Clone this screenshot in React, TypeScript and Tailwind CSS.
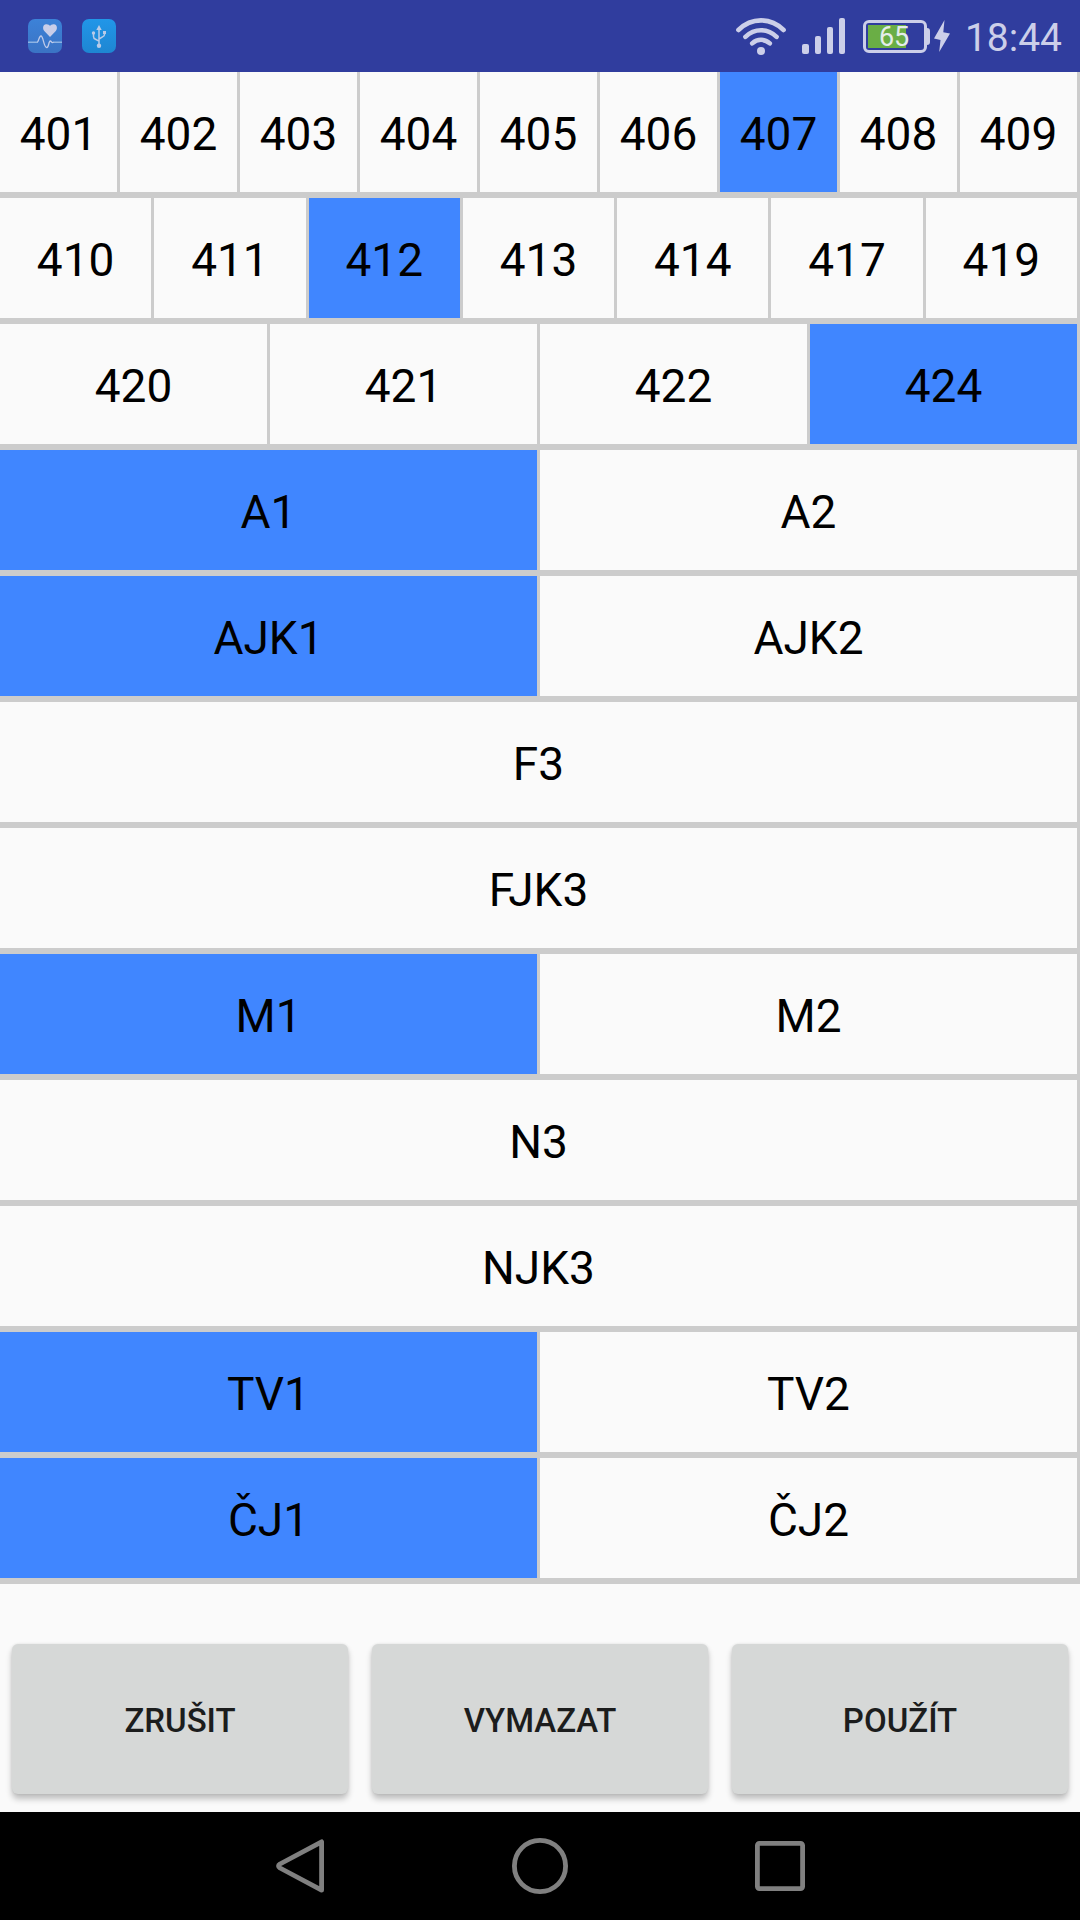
import { useState } from "react";

const ROWS: string[][] = [
  ["401", "402", "403", "404", "405", "406", "407", "408", "409"],
  ["410", "411", "412", "413", "414", "417", "419"],
  ["420", "421", "422", "424"],
  ["A1", "A2"],
  ["AJK1", "AJK2"],
  ["F3"],
  ["FJK3"],
  ["M1", "M2"],
  ["N3"],
  ["NJK3"],
  ["TV1", "TV2"],
  ["ČJ1", "ČJ2"],
];

const INITIAL = ["407", "412", "424", "A1", "AJK1", "M1", "TV1", "ČJ1"];

function HealthIcon() {
  return (
    <svg width="34" height="34" viewBox="0 0 34 34" aria-hidden="true">
      <defs>
        <linearGradient id="health" x1="0" y1="0" x2="0" y2="1">
          <stop offset="0" stopColor="#3c82d8" />
          <stop offset="1" stopColor="#3b73c4" />
        </linearGradient>
      </defs>
      <rect width="34" height="34" rx="7" fill="url(#health)" />
      <path d="M22 18 L16.3 12 C14.2 9.3 15 5.6 18 5.2 C20 5 21.4 5.8 22 7 C22.7 5.8 24.2 5 26 5.2 C29 5.6 29.9 9.3 27.8 12 Z" fill="#c9cee9" />
      <path d="M0 23.3 H10 M25 23.3 H34" stroke="#8db3e3" strokeWidth="1.6" />
      <path d="M9.5 23 C10.8 22 11 17 13 17 C15.5 17 15.5 28.5 18.8 28.5 C21 28.5 20.5 22 22.3 22 C23.4 22 23.6 24.5 25.5 23.3" fill="none" stroke="#c0cbea" strokeWidth="1.3" />
    </svg>
  );
}

function UsbIcon() {
  return (
    <svg width="34" height="34" viewBox="0 0 34 34" aria-hidden="true">
      <defs>
        <linearGradient id="usb" x1="0" y1="0" x2="0" y2="1">
          <stop offset="0" stopColor="#2196e8" />
          <stop offset="1" stopColor="#1e86d2" />
        </linearGradient>
      </defs>
      <rect width="34" height="34" rx="7" fill="url(#usb)" />
      <g fill="none" stroke="#b9cbe8" strokeWidth="1.5">
        <path d="M17 9 V27 M11.5 14 V17.5 Q11.5 19.5 13.5 20.3 L17 22.2 M22.5 14 V15.5 Q22.5 17 20.5 17.9 L17 20" />
      </g>
      <g fill="#b9cbe8">
        <path d="M17 6 L19.7 11 H14.3 Z" />
        <circle cx="11.5" cy="14" r="1.7" />
        <rect x="21" y="12" width="3" height="3" />
        <circle cx="17" cy="26.8" r="2.2" />
      </g>
    </svg>
  );
}

function WifiIcon() {
  return (
    <svg width="50" height="37" viewBox="0 0 50 37" aria-label="Wi-Fi">
      <g fill="none" stroke="#cccfe9" strokeWidth="4.6" strokeLinecap="round">
        <path d="M2.4 12 C15.5 -0.8 34.5 -0.8 47.6 12" />
        <path d="M9.4 18.8 C18.5 10 31.5 10 40.6 18.8" />
        <path d="M16.2 25.4 C21.4 20.6 28.6 20.6 33.8 25.4" />
      </g>
      <circle cx="25" cy="33" r="4" fill="#cccfe9" />
    </svg>
  );
}

function SignalIcon() {
  return (
    <svg width="43" height="36" viewBox="0 0 43 36" fill="#cccfe9" aria-label="Signal">
      <rect x="0" y="26" width="7" height="10" rx="2" />
      <rect x="13" y="18" width="6" height="18" rx="2" />
      <rect x="25" y="9" width="6" height="27" rx="2" />
      <rect x="37" y="0" width="6" height="36" rx="2" />
    </svg>
  );
}

function Battery() {
  return (
    <div className="flex items-center">
      <div className="flex h-[33px] w-16 items-center rounded-md border-3 border-[#cccfe9] p-0.5">
        <div className="flex h-full w-[38px] items-center bg-[#6aae45] pt-0.5 pl-[11px]">
          <span className="text-[27px] leading-none text-[#e4edea]">65</span>
        </div>
      </div>
      <div className="h-[17px] w-[3px] rounded-r-sm bg-[#cccfe9]" />
      <svg className="ml-1" width="16" height="32" viewBox="0 0 16 32" aria-hidden="true">
        <path d="M10.5 0 L0 18.5 L6.5 20 L5.2 32 L16 13.5 L9.3 12.3 Z" fill="#cccfe9" />
      </svg>
    </div>
  );
}

export default function App() {
  const [selected, setSelected] = useState<string[]>(INITIAL);

  const toggle = (name: string) =>
    setSelected((s) => (s.includes(name) ? s.filter((n) => n !== name) : [...s, name]));

  const actions = [
    { label: "ZRUŠIT", run: () => setSelected(INITIAL) },
    { label: "VYMAZAT", run: () => setSelected([]) },
    { label: "POUŽÍT", run: () => {} },
  ];

  return (
    <div className="flex min-h-screen flex-col bg-[#fafafa] font-['Roboto',sans-serif] text-black">
      <header className="flex h-18 shrink-0 items-center justify-between bg-[#303d9e] pr-[18px] pl-7">
        <div className="flex items-center gap-5">
          <HealthIcon />
          <UsbIcon />
        </div>
        <div className="flex items-center gap-4">
          <WifiIcon />
          <SignalIcon />
          <div className="flex items-center gap-[15px] pl-0.5">
            <Battery />
            <time className="pt-1 text-[39px] leading-none text-[#cccfe9]">18:44</time>
          </div>
        </div>
      </header>

      <main className="flex flex-1 flex-col">
        <div className="flex flex-col">
          {ROWS.map((row) => (
            <div key={row[0]} className="flex border-b-6 border-[#cccccc]">
              {row.map((name) => (
                <button
                  key={name}
                  type="button"
                  aria-pressed={selected.includes(name)}
                  onClick={() => toggle(name)}
                  className={`h-[120px] min-w-0 flex-1 border-r-3 border-[#cccccc] pt-1 text-[46px] leading-none ${
                    selected.includes(name) ? "bg-[#4086ff]" : "bg-[#fafafa]"
                  }`}
                >
                  {name}
                </button>
              ))}
            </div>
          ))}
        </div>

        <div className="mt-auto flex gap-6 px-3 pt-6 pb-[18px]">
          {actions.map(({ label, run }) => (
            <button
              key={label}
              type="button"
              onClick={run}
              className="h-[150px] flex-1 rounded-md bg-[#d6d8d7] pt-0.5 text-[33px] leading-none font-medium text-[#1c1d1d] shadow-[0_5px_6px_rgba(0,0,0,0.24),0_0_3px_rgba(0,0,0,0.1)]"
            >
              {label}
            </button>
          ))}
        </div>
      </main>

      <nav className="flex h-27 shrink-0 items-center justify-center gap-[184px] bg-black">
        <button type="button" aria-label="Back" className="flex w-14 justify-center">
          <svg width="56" height="56" viewBox="0 0 56 56" fill="none" stroke="#808080" strokeWidth="4.8" strokeLinejoin="round">
            <path d="M49.6 3.8 V52.2 L8 30 Q5 28 8 26 Z" />
          </svg>
        </button>
        <button type="button" aria-label="Home" className="flex w-14 justify-center">
          <svg width="56" height="56" viewBox="0 0 56 56" fill="none" stroke="#808080" strokeWidth="4.8">
            <circle cx="28" cy="28" r="25.6" />
          </svg>
        </button>
        <button type="button" aria-label="Recent apps" className="flex w-14 justify-center">
          <svg width="56" height="56" viewBox="0 0 56 56" fill="none" stroke="#808080" strokeWidth="4.8">
            <rect x="5.4" y="5.4" width="45.2" height="45.2" rx="2" />
          </svg>
        </button>
      </nav>
    </div>
  );
}
